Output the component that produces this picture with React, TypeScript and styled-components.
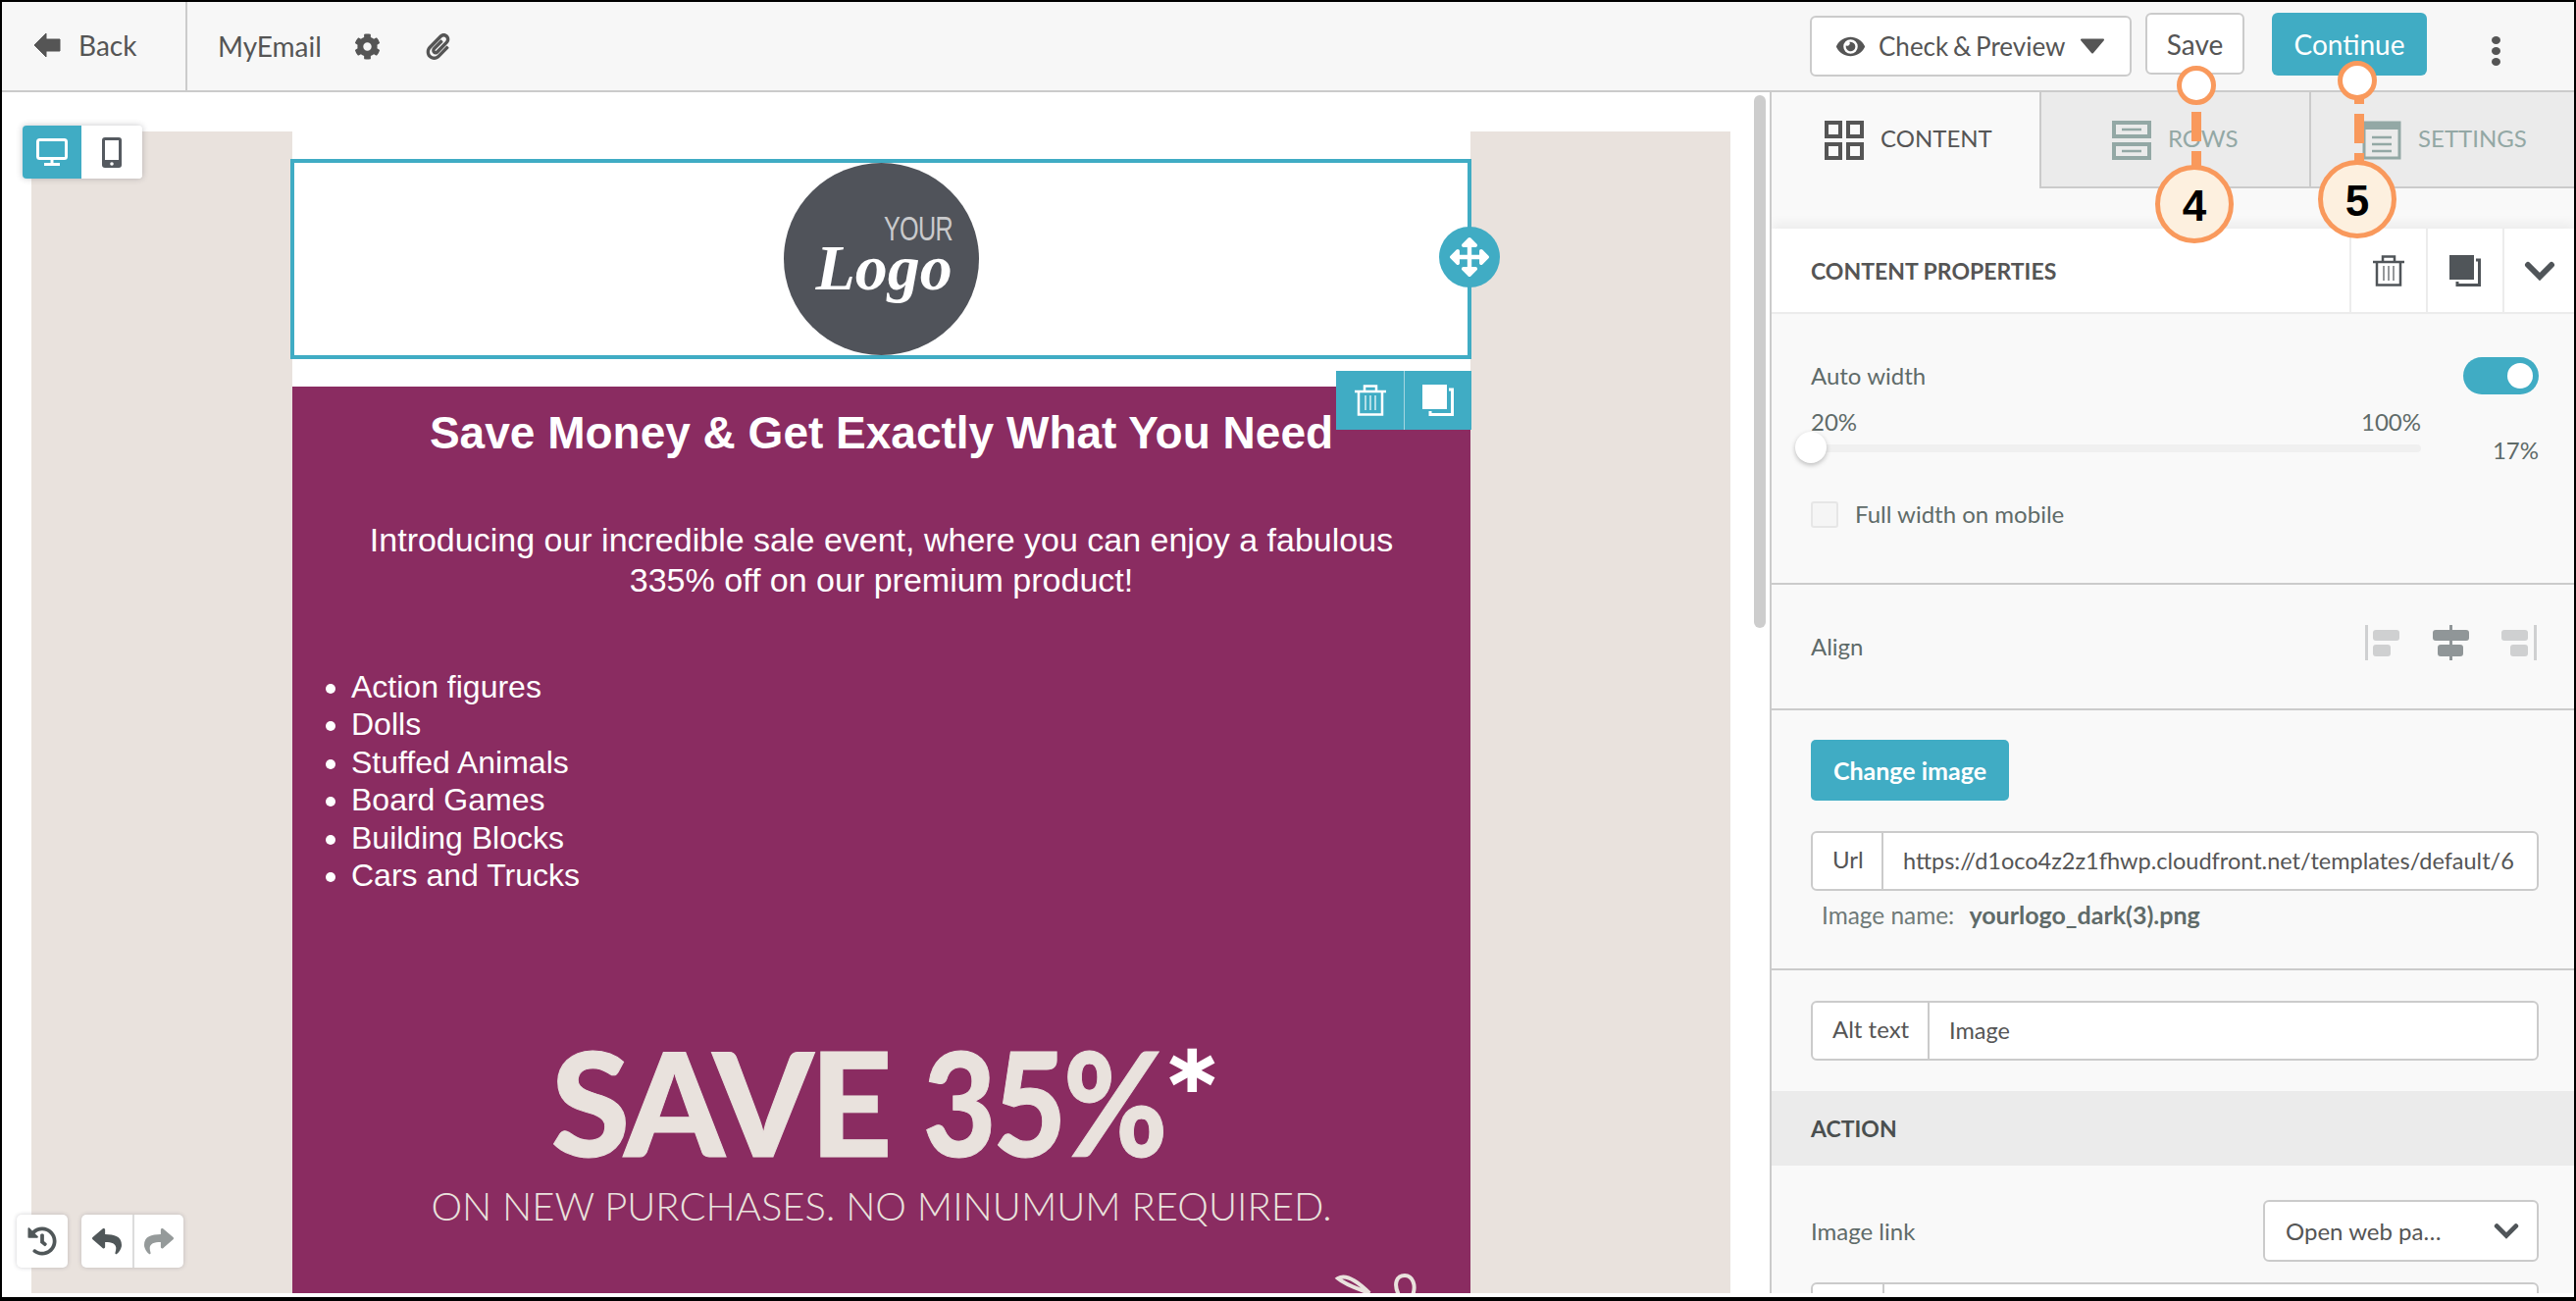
import React from "react";
import styled, { createGlobalStyle } from "styled-components";
import { FaCog, FaPaperclip, FaEye, FaHistory, FaReply, FaShare, FaArrowsAlt } from "react-icons/fa";

const TEAL = "#40acc4";
const BEIGE = "#e9e2dd";
const PURPLE = "#8a2c61";
const ORANGE = "#f9995c";
const LINE = "#cbcbcb";

const GlobalStyle = createGlobalStyle`
    html, body {
        margin: 0;
        padding: 0;
        background: #fff;
    }
    * {
        box-sizing: border-box;
    }
`;

const Frame = styled.div`
    position: relative;
    width: 2626px;
    height: 1326px;
    display: flex;
    flex-direction: column;
    overflow: hidden;
    background: #fff;
    border: 2px solid #000;
    border-bottom-width: 4px;
    font-family: Lato, "Liberation Sans", sans-serif;
    color: #555;
`;

/* top bar */
const TopBar = styled.header`
    flex: none;
    height: 92px;
    display: flex;
    align-items: center;
    background: #f7f7f7;
    border-bottom: 2px solid ${LINE};
`;

const BackBox = styled.div`
    width: 189px;
    height: 92px;
    flex: none;
    display: flex;
    align-items: center;
    gap: 18px;
    padding: 0 0 2px 32px;
    border-right: 2px solid ${LINE};
    font-size: 28px;
    color: #555;
`;

const Title = styled.span`
    margin-left: 31px;
    font-size: 28px;
    color: #555;
`;

const TitleIcon = styled.span<{ $gap: number }>`
    display: flex;
    margin-left: ${(p) => p.$gap}px;
    font-size: 27px;
    color: #555;
`;

const BarActions = styled.div`
    margin-left: auto;
    display: flex;
    align-items: flex-start;
    height: 92px;
    padding-top: 12px;
`;

const PreviewButton = styled.div`
    width: 328px;
    height: 62px;
    margin-top: 3px;
    margin-right: 14px;
    display: flex;
    align-items: center;
    padding-left: 25px;
    background: #fff;
    border: 2px solid ${LINE};
    border-radius: 6px;
    font-size: 26px;
    word-spacing: -2px;
    color: #555;
    svg:first-child {
        font-size: 29px;
        margin-right: 14px;
    }
    svg:last-child {
        margin-left: 15px;
    }
`;

const SaveButton = styled.div`
    width: 101px;
    height: 63px;
    display: flex;
    align-items: center;
    justify-content: center;
    background: #fff;
    border: 2px solid ${LINE};
    border-radius: 6px;
    font-size: 28px;
    color: #555;
`;

const ContinueButton = styled.div`
    width: 158px;
    height: 64px;
    margin-left: 28px;
    display: flex;
    align-items: center;
    justify-content: center;
    background: ${TEAL};
    border-radius: 6px;
    font-size: 28px;
    color: #fff;
`;

const Kebab = styled.div`
    width: 150px;
    height: 64px;
    padding: 24px 0 0 66px;
    display: flex;
    flex-direction: column;
    gap: 3px;
    i {
        display: block;
        width: 9px;
        height: 8px;
        border-radius: 50%;
        background: #555;
    }
`;

/* page body */
const Body = styled.div`
    flex: 1;
    min-height: 0;
    display: flex;
    padding-bottom: 4px;
`;

const Canvas = styled.main`
    position: relative;
    width: 1802px;
    flex: none;
    display: flex;
    padding: 40px 0 0 30px;
`;

const Stage = styled.div`
    width: 1732px;
    flex: none;
    padding-left: 266px;
    background: ${BEIGE};
    overflow: hidden;
`;

const Scrollbar = styled.div`
    position: absolute;
    left: 1786px;
    top: 3px;
    width: 12px;
    height: 543px;
    border-radius: 6px;
    background: #cdcdcd;
`;

const EmailColumn = styled.div`
    position: relative;
    width: 1201px;
    height: 100%;
    padding-top: 28px;
    background: #fff;
`;

const LogoRow = styled.div`
    position: relative;
    width: 1204px;
    height: 204px;
    margin-left: -2px;
    display: flex;
    justify-content: center;
    border: 4px solid ${TEAL};
`;

const LogoBadge = styled.div`
    width: 199px;
    height: 196px;
    border-radius: 50%;
    background: #50535a;
    color: #fff;
    position: relative;
`;

const LogoYour = styled.span`
    position: absolute;
    left: 102px;
    top: 52px;
    font-family: "Liberation Sans", sans-serif;
    font-size: 35px;
    line-height: 30px;
    letter-spacing: -1px;
    transform: scaleX(0.72);
    transform-origin: left;
    color: #c9cacc;
`;

const LogoScript = styled.span`
    position: absolute;
    left: 33px;
    top: 82px;
    font-family: "Liberation Serif", serif;
    font-style: italic;
    font-weight: 700;
    font-size: 66px;
    line-height: 50px;
`;

const MoveHandle = styled.div`
    position: absolute;
    right: -33px;
    top: 65px;
    width: 62px;
    height: 62px;
    border-radius: 50%;
    background: ${TEAL};
    color: #fff;
    display: flex;
    align-items: center;
    justify-content: center;
    font-size: 40px;
    z-index: 2;
`;

const PurpleBlock = styled.section`
    position: relative;
    margin-top: 28px;
    height: 924px;
    padding-top: 19px;
    background: ${PURPLE};
    color: #fff;
    font-family: "Liberation Sans", Arial, sans-serif;
`;

const RowActions = styled.div`
    position: absolute;
    top: -16px;
    right: -1px;
    display: flex;
    height: 60px;
    background: ${TEAL};
    z-index: 2;
`;

const RowAction = styled.div`
    width: 69px;
    display: flex;
    align-items: center;
    justify-content: center;
    & + & {
        border-left: 1px solid #a4d6e1;
    }
`;

const Heading = styled.h1`
    margin: 0;
    text-align: center;
    font-size: 46px;
    line-height: 56px;
    font-weight: 700;
`;

const Intro = styled.p`
    margin: 61px 0 0;
    text-align: center;
    font-size: 34px;
    line-height: 41px;
    padding: 0 70px;
`;

const List = styled.ul`
    margin: 69px 0 0;
    padding: 0 0 0 60px;
    font-size: 32px;
    line-height: 38.4px;
`;

const SaveBanner = styled.div`
    margin-top: 139px;
    text-align: center;
    font-family: Lato, sans-serif;
    font-weight: 900;
    font-size: 146px;
    line-height: 146px;
    letter-spacing: -3.5px;
    word-spacing: 4px;
    -webkit-text-stroke: 1px ${BEIGE};
    color: ${BEIGE};
    sup {
        font-family: "DejaVu Sans", sans-serif;
        font-weight: 700;
        font-size: 90px;
        line-height: 0;
        vertical-align: 42px;
        margin-left: 4px;
        -webkit-text-stroke: 2px #fff;
        color: #fff;
    }
`;

const SaveFigure = styled.span`
    display: inline-block;
    margin-right: -33px;
    transform: scaleX(0.88);
    transform-origin: left;
`;

const SaveNote = styled.div`
    margin-top: 9px;
    text-align: center;
    font-family: Lato, sans-serif;
    font-weight: 300;
    font-size: 40px;
    line-height: 48px;
    color: ${BEIGE};
`;

const Scissors = styled.svg`
    position: absolute;
    left: 1062px;
    bottom: 0;
`;

/* floating tools */
const DeviceSwitch = styled.div`
    position: absolute;
    left: 21px;
    top: 34px;
    width: 122px;
    height: 54px;
    display: flex;
    background: #fff;
    border-radius: 4px;
    overflow: hidden;
    box-shadow: 0 0 6px rgba(60, 60, 70, 0.3);
    z-index: 3;
`;

const DeviceCell = styled.div<{ $on?: boolean }>`
    width: ${(p) => (p.$on ? 60 : 62)}px;
    display: flex;
    align-items: center;
    justify-content: center;
    background: ${(p) => (p.$on ? TEAL : "#fff")};
`;

const HistoryTools = styled.div`
    position: absolute;
    left: 15px;
    bottom: 26px;
    display: flex;
    gap: 14px;
    z-index: 3;
`;

const ToolGroup = styled.div`
    display: flex;
    height: 54px;
    background: #fff;
    border-radius: 5px;
    box-shadow: 0 0 4px rgba(60, 60, 70, 0.25);
`;

const ToolButton = styled.div<{ $muted?: boolean }>`
    width: 52px;
    display: flex;
    align-items: center;
    justify-content: center;
    font-size: 30px;
    color: ${(p) => (p.$muted ? "#959a9a" : "#505759")};
    & + & {
        border-left: 2px solid #dcdcdc;
    }
`;

/* right panel */
const Panel = styled.aside`
    width: 820px;
    flex: none;
    overflow: hidden;
    background: #f9f9f9;
    border-left: 2px solid ${LINE};
`;

const Tabs = styled.div`
    display: flex;
    height: 98px;
`;

const Tab = styled.div<{ $active?: boolean; $width: number; $inset: number }>`
    width: ${(p) => p.$width}px;
    display: flex;
    align-items: flex-start;
    gap: 17px;
    padding: 29px 0 0 ${(p) => p.$inset}px;
    background: ${(p) => (p.$active ? "#f9f9f9" : "#ebebeb")};
    border-bottom: ${(p) => (p.$active ? "0" : `2px solid ${LINE}`)};
    border-right: 2px solid ${LINE};
    font-size: 24px;
    line-height: 36px;
    color: ${(p) => (p.$active ? "#555" : "#93a8a5")};
    &:last-child {
        border-right: 0;
    }
`;

const PropsHeader = styled.div`
    height: 87px;
    margin-top: 41px;
    display: flex;
    align-items: stretch;
    background: #fff;
    border-bottom: 2px solid #ececec;
    box-shadow: 0 -6px 10px rgba(0, 0, 0, 0.05);
`;

const PropsTitle = styled.div`
    flex: 1;
    display: flex;
    align-items: center;
    padding-left: 40px;
    font-size: 23px;
    font-weight: 700;
    color: #555;
`;

const PropsAction = styled.div<{ $width: number }>`
    width: ${(p) => p.$width}px;
    display: flex;
    align-items: center;
    justify-content: center;
    border-left: 2px solid #ececec;
    color: #505559;
`;

const Section = styled.div<{ $height: number; $bare?: boolean }>`
    display: flow-root;
    height: ${(p) => p.$height}px;
    padding: 0 36px 0 40px;
    border-bottom: ${(p) => (p.$bare ? "0" : `2px solid ${LINE}`)};
`;

const Label = styled.span`
    font-size: 24px;
    line-height: 28px;
    color: #5f6b69;
`;

const AutoRow = styled.div`
    display: flex;
    align-items: center;
    justify-content: space-between;
    padding-top: 43px;
    height: 83px;
`;

const Toggle = styled.div`
    width: 77px;
    height: 38px;
    padding: 6px;
    display: flex;
    justify-content: flex-end;
    border-radius: 19px;
    background: ${TEAL};
    i {
        display: block;
        width: 26px;
        height: 26px;
        border-radius: 50%;
        background: #fff;
    }
`;

const SliderRow = styled.div`
    display: flex;
    align-items: flex-end;
    justify-content: space-between;
    margin-top: 13px;
`;

const SliderBox = styled.div`
    width: 622px;
`;

const SliderScale = styled.div`
    display: flex;
    justify-content: space-between;
    height: 30px;
`;

const SliderTrack = styled.div`
    position: relative;
    height: 8px;
    margin-top: 7px;
    border-radius: 4px;
    background: #f0f0f0;
`;

const SliderKnob = styled.div`
    position: absolute;
    left: -16px;
    top: -13px;
    width: 32px;
    height: 32px;
    border-radius: 50%;
    background: #fff;
    box-shadow: 0 2px 5px rgba(0, 0, 0, 0.25);
`;

const SliderValue = styled(Label)`
    margin-bottom: -12px;
`;

const CheckRow = styled.div`
    display: flex;
    align-items: center;
    gap: 17px;
    margin-top: 49px;
`;

const CheckBox = styled.div`
    width: 28px;
    height: 27px;
    background: #f5f5f5;
    border: 2px solid #e6e6e6;
    border-radius: 3px;
`;

const AlignRow = styled.div`
    height: 100%;
    display: flex;
    align-items: center;
    justify-content: space-between;
    padding-right: 2px;
`;

const AlignIcons = styled.div`
    display: flex;
    gap: 33px;
    margin-bottom: 8px;
`;

const ChangeButton = styled.div`
    width: 202px;
    height: 62px;
    margin-top: 30px;
    display: flex;
    align-items: center;
    justify-content: center;
    background: ${TEAL};
    border-radius: 5px;
    font-size: 25px;
    font-weight: 700;
    color: #fff;
`;

const InputGroup = styled.div<{ $top: number }>`
    display: flex;
    height: 61px;
    margin-top: ${(p) => p.$top}px;
    background: #fff;
    border: 2px solid ${LINE};
    border-radius: 6px;
`;

const InputAddon = styled.div<{ $width: number }>`
    width: ${(p) => p.$width}px;
    flex: none;
    padding: 0 0 4px 20px;
    display: flex;
    align-items: center;
    border-right: 2px solid ${LINE};
    font-size: 24px;
    color: #555;
`;

const InputValue = styled.div`
    flex: 1;
    padding: 0 0 2px 20px;
    display: flex;
    align-items: center;
    white-space: nowrap;
    overflow: hidden;
    font-size: 23.5px;
    color: #555;
`;

const ImageName = styled.div`
    margin: 10px 0 0 11px;
    font-size: 24.4px;
    line-height: 28px;
    color: #6f7a78;
    b {
        margin-left: 9px;
        font-size: 25px;
        color: #5f6b69;
    }
`;

const ActionBand = styled.div`
    height: 76px;
    display: flex;
    align-items: center;
    padding-left: 40px;
    background: #ebebeb;
    font-size: 23px;
    font-weight: 700;
    color: #4a4f4f;
`;

const LinkRow = styled.div`
    display: flex;
    align-items: center;
    justify-content: space-between;
    padding: 35px 36px 0 40px;
`;

const SelectBox = styled.div`
    width: 281px;
    height: 63px;
    display: flex;
    align-items: center;
    justify-content: space-between;
    padding: 0 18px 0 21px;
    background: #fff;
    border: 2px solid ${LINE};
    border-radius: 6px;
    font-size: 24px;
    color: #555;
`;

const ClippedGroup = styled.div`
    height: 40px;
    margin: 21px 36px 0 40px;
    display: flex;
    background: #fff;
    border: 2px solid ${LINE};
    border-radius: 6px;
    div {
        width: 73px;
        border-right: 2px solid ${LINE};
    }
`;

/* numbered callouts */
const PinDot = styled.div<{ $x: number; $y: number }>`
    position: absolute;
    left: ${(p) => p.$x - 22}px;
    top: ${(p) => p.$y - 22}px;
    width: 40px;
    height: 40px;
    border-radius: 50%;
    background: #fff;
    border: 5px solid ${ORANGE};
    z-index: 6;
`;

const PinDash = styled.div<{ $x: number; $from: number; $to: number }>`
    position: absolute;
    left: ${(p) => p.$x - 7}px;
    top: ${(p) => p.$from - 2}px;
    width: 10px;
    height: ${(p) => p.$to - p.$from}px;
    background: ${ORANGE};
    z-index: 5;
`;

const PinBadge = styled.div<{ $x: number; $y: number }>`
    position: absolute;
    left: ${(p) => p.$x - 42}px;
    top: ${(p) => p.$y - 42}px;
    width: 80px;
    height: 80px;
    padding-top: 3px;
    display: flex;
    align-items: center;
    justify-content: center;
    border-radius: 50%;
    background: #fdf0df;
    border: 5px solid ${ORANGE};
    font-family: "Liberation Sans", sans-serif;
    font-weight: 700;
    font-size: 44px;
    color: #000;
    z-index: 6;
`;

const BackArrow = () => (
    <svg width="28" height="26" viewBox="0 0 28 26">
        <path d="M1 13 L13 1 V7 H27 V19 H13 V25 Z" fill="#555" stroke="#555" strokeLinejoin="round" />
    </svg>
);

const CaretIcon = () => (
    <svg width="26" height="16" viewBox="0 0 26 16">
        <path d="M2 1.5 H24 L13 14.5 Z" fill="#555" stroke="#555" strokeWidth="2" strokeLinejoin="round" />
    </svg>
);

const ChevronIcon = ({ width, height }: { width: number; height: number }) => (
    <svg width={width} height={height} viewBox="0 0 32 20" fill="none" stroke="#505559" strokeWidth="6" strokeLinecap="round">
        <path d="M4 4 L16 16 L28 4" />
    </svg>
);

const TrashIcon = ({ color }: { color: string }) => (
    <svg width="32" height="32" viewBox="0 0 32 32" fill="none" stroke={color} strokeWidth="2.5">
        <path d="M0 7 H32 M10 6 V1.5 H22 V6 M4 8 V30.5 H28 V8" />
        <path d="M11 11 V26 M16 11 V26 M21 11 V26" strokeWidth="1.2" />
    </svg>
);

const CopyIcon = ({ color }: { color: string }) => (
    <svg width="32" height="32" viewBox="0 0 32 32">
        <rect x="0" y="0" width="25" height="25" fill={color} />
        <path d="M27 5 H30.5 V30.5 H8 V27" fill="none" stroke={color} strokeWidth="3" />
    </svg>
);

const GridIcon = () => (
    <svg width="40" height="40" viewBox="0 0 40 40" fill="none" stroke="#555" strokeWidth="4">
        <rect x="2" y="2" width="14" height="14" />
        <rect x="24" y="2" width="14" height="14" />
        <rect x="2" y="24" width="14" height="14" />
        <rect x="24" y="24" width="14" height="14" />
    </svg>
);

const RowsIcon = () => (
    <svg width="40" height="40" viewBox="0 0 40 40" fill="none" stroke="#93a8a5" strokeWidth="4">
        <rect x="2" y="2" width="36" height="14" />
        <rect x="2" y="24" width="36" height="14" />
        <path d="M10 9 H30 M10 31 H30" strokeWidth="2.5" />
    </svg>
);

const SettingsIcon = () => (
    <svg width="40" height="40" viewBox="0 0 40 40" fill="none" stroke="#93a8a5" strokeWidth="3">
        <rect x="2" y="2" width="36" height="36" />
        <path d="M2 6 H38" strokeWidth="6" />
        <path d="M10 17 H30 M10 24 H30 M10 31 H30" strokeWidth="2.5" />
    </svg>
);

type AlignSide = "left" | "center" | "right";

const alignParts: Record<AlignSide, { width: number; rule: number; top: number[]; low: number[] }> = {
    left: { width: 36, rule: 0, top: [8, 27], low: [8, 18] },
    center: { width: 37, rule: 17, top: [0, 37], low: [5, 26] },
    right: { width: 36, rule: 33, top: [0, 27], low: [9, 18] },
};

const AlignIcon = ({ side, color }: { side: AlignSide; color: string }) => {
    const parts = alignParts[side];
    return (
        <svg width={parts.width} height="36" viewBox={`0 0 ${parts.width} 36`}>
            <rect x={parts.rule} y="0" width="3" height="36" fill={color} />
            <rect x={parts.top[0]} y="5" width={parts.top[1]} height="11" rx="3" fill={color} />
            <rect x={parts.low[0]} y="20" width={parts.low[1]} height="12" rx="3" fill={color} />
        </svg>
    );
};

const listItems = ["Action figures", "Dolls", "Stuffed Animals", "Board Games", "Building Blocks", "Cars and Trucks"];

const App: React.FC = () => {
    return (
        <Frame>
            <GlobalStyle />
            <TopBar>
                <BackBox>
                    <BackArrow />
                    Back
                </BackBox>
                <Title>MyEmail</Title>
                <TitleIcon $gap={33}>
                    <FaCog />
                </TitleIcon>
                <TitleIcon $gap={45}>
                    <FaPaperclip />
                </TitleIcon>
                <BarActions>
                    <PreviewButton>
                        <FaEye />
                        Check &amp; Preview
                        <CaretIcon />
                    </PreviewButton>
                    <SaveButton>Save</SaveButton>
                    <ContinueButton>Continue</ContinueButton>
                    <Kebab>
                        <i />
                        <i />
                        <i />
                    </Kebab>
                </BarActions>
            </TopBar>
            <Body>
                <Canvas>
                    <DeviceSwitch>
                        <DeviceCell $on>
                            <svg width="32" height="28" viewBox="0 0 32 28" fill="none" stroke="#fff" strokeWidth="3">
                                <rect x="1.5" y="1.5" width="29" height="19" rx="2" />
                                <path d="M16 21 V25 M8 26.5 H24" />
                            </svg>
                        </DeviceCell>
                        <DeviceCell>
                            <svg width="20" height="31" viewBox="0 0 20 31">
                                <rect x="0" y="0" width="20" height="31" rx="3" fill="#555a60" />
                                <rect x="3" y="3" width="14" height="20" fill="#fff" />
                                <circle cx="10" cy="27" r="1.8" fill="#fff" />
                            </svg>
                        </DeviceCell>
                    </DeviceSwitch>
                    <Stage>
                        <EmailColumn>
                            <LogoRow>
                                <LogoBadge>
                                    <LogoYour>YOUR</LogoYour>
                                    <LogoScript>Logo</LogoScript>
                                </LogoBadge>
                                <MoveHandle>
                                    <FaArrowsAlt />
                                </MoveHandle>
                            </LogoRow>
                            <PurpleBlock>
                                <RowActions>
                                    <RowAction>
                                        <TrashIcon color="#fff" />
                                    </RowAction>
                                    <RowAction>
                                        <CopyIcon color="#fff" />
                                    </RowAction>
                                </RowActions>
                                <Heading>Save Money &amp; Get Exactly What You Need</Heading>
                                <Intro>
                                    Introducing our incredible sale event, where you can enjoy a fabulous 335% off on
                                    our premium product!
                                </Intro>
                                <List>
                                    {listItems.map((item) => (
                                        <li key={item}>{item}</li>
                                    ))}
                                </List>
                                <SaveBanner>
                                    SAVE <SaveFigure>35%</SaveFigure>
                                    <sup>*</sup>
                                </SaveBanner>
                                <SaveNote>ON NEW PURCHASES. NO MINUMUM REQUIRED.</SaveNote>
                                <Scissors width="90" height="20" viewBox="0 0 90 20" fill="none" stroke="#e9e2dd" strokeWidth="4">
                                    <path d="M4 5 C12 0 24 8 36 20 C26 16 12 12 4 5 Z" />
                                    <path d="M66 22 C60 10 64 2 72 2 C80 2 84 12 80 22" />
                                </Scissors>
                            </PurpleBlock>
                        </EmailColumn>
                    </Stage>
                    <Scrollbar />
                    <HistoryTools>
                        <ToolGroup>
                            <ToolButton>
                                <FaHistory />
                            </ToolButton>
                        </ToolGroup>
                        <ToolGroup>
                            <ToolButton>
                                <FaReply />
                            </ToolButton>
                            <ToolButton $muted>
                                <FaShare />
                            </ToolButton>
                        </ToolGroup>
                    </HistoryTools>
                </Canvas>
                <Panel>
                    <Tabs>
                        <Tab $active $width={275} $inset={54}>
                            <GridIcon />
                            CONTENT
                        </Tab>
                        <Tab $width={275} $inset={72}>
                            <RowsIcon />
                            ROWS
                        </Tab>
                        <Tab $width={268} $inset={52}>
                            <SettingsIcon />
                            SETTINGS
                        </Tab>
                    </Tabs>
                    <PropsHeader>
                        <PropsTitle>CONTENT PROPERTIES</PropsTitle>
                        <PropsAction $width={78}>
                            <TrashIcon color="#505559" />
                        </PropsAction>
                        <PropsAction $width={78}>
                            <CopyIcon color="#505559" />
                        </PropsAction>
                        <PropsAction $width={73}>
                            <ChevronIcon width={32} height={20} />
                        </PropsAction>
                    </PropsHeader>
                    <Section $height={276}>
                        <AutoRow>
                            <Label>Auto width</Label>
                            <Toggle>
                                <i />
                            </Toggle>
                        </AutoRow>
                        <SliderRow>
                            <SliderBox>
                                <SliderScale>
                                    <Label>20%</Label>
                                    <Label>100%</Label>
                                </SliderScale>
                                <SliderTrack>
                                    <SliderKnob />
                                </SliderTrack>
                            </SliderBox>
                            <SliderValue>17%</SliderValue>
                        </SliderRow>
                        <CheckRow>
                            <CheckBox />
                            <Label>Full width on mobile</Label>
                        </CheckRow>
                    </Section>
                    <Section $height={128}>
                        <AlignRow>
                            <Label>Align</Label>
                            <AlignIcons>
                                <AlignIcon side="left" color="#cfd0d1" />
                                <AlignIcon side="center" color="#909698" />
                                <AlignIcon side="right" color="#cfd0d1" />
                            </AlignIcons>
                        </AlignRow>
                    </Section>
                    <Section $height={265}>
                        <ChangeButton>Change image</ChangeButton>
                        <InputGroup $top={31}>
                            <InputAddon $width={72}>Url</InputAddon>
                            <InputValue>https://d1oco4z2z1fhwp.cloudfront.net/templates/default/6</InputValue>
                        </InputGroup>
                        <ImageName>
                            Image name: <b>yourlogo_dark(3).png</b>
                        </ImageName>
                    </Section>
                    <Section $height={123} $bare>
                        <InputGroup $top={31}>
                            <InputAddon $width={119}>Alt text</InputAddon>
                            <InputValue>Image</InputValue>
                        </InputGroup>
                    </Section>
                    <ActionBand>ACTION</ActionBand>
                    <LinkRow>
                        <Label>Image link</Label>
                        <SelectBox>
                            Open web pa…
                            <ChevronIcon width={26} height={17} />
                        </SelectBox>
                    </LinkRow>
                    <ClippedGroup>
                        <div />
                    </ClippedGroup>
                </Panel>
            </Body>
            <PinDot $x={2239} $y={87} />
            <PinDash $x={2239} $from={114} $to={144} />
            <PinDash $x={2239} $from={154} $to={170} />
            <PinBadge $x={2237} $y={208}>
                4
            </PinBadge>
            <PinDot $x={2403} $y={82} />
            <PinDash $x={2405} $from={97} $to={106} />
            <PinDash $x={2405} $from={116} $to={146} />
            <PinDash $x={2405} $from={156} $to={165} />
            <PinBadge $x={2403} $y={203}>
                5
            </PinBadge>
        </Frame>
    );
};

export default App;
